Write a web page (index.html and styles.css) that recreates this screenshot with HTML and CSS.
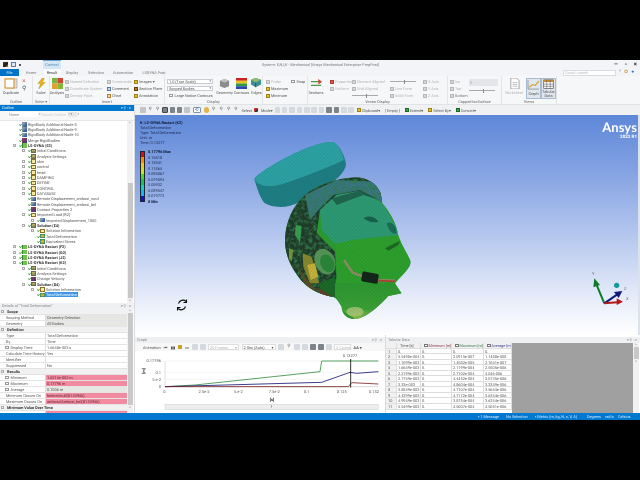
FILE: index.html
```html
<!DOCTYPE html>
<html lang="en">
<head>
<meta charset="utf-8">
<title>System: E,N,I,K - Mechanical</title>
<link rel="stylesheet" href="styles.css">
</head>
<body>
<div class="screen">
  <div class="black top"></div>
  <div class="app">
    <header class="titlebar">
      <div class="qat"><i class="qi dark"></i><i class="qi save"></i><i class="qi caret"></i></div>
      <div class="ctx">Context</div>
      <div class="apptitle">System: E,N,I,K - Mechanical [Ansys Mechanical Enterprise PrepPost]</div>
      <div class="winbtns"><span>–</span><span>▫</span><span>×</span></div>
    </header>
    <nav class="tabs">
      <span class="tab file">File</span><span class="tab home">Home</span><span class="tab active">Result</span><span class="tab disp">Display</span><span class="tab sel">Selection</span><span class="tab auto">Automation</span><span class="tab ls">LSDYNA Post</span>
      <span class="spring"></span>
      <span class="quick">Quick Launch</span><span class="qicons"><i>^</i><i class="gear">✿</i><i class="help">●</i></span>
    </nav>
    <section class="ribbon">
      <div class="rg g-outline">
        <div class="rb">
          <div class="big"><svg class="bi" viewBox="0 0 14 12"><rect x="3" y="1" width="10" height="9" fill="#ddd" stroke="#999" stroke-width=".6"/><rect x="1" y="1" width="9" height="9" fill="#fff" stroke="#d99a3a" stroke-width="1.2"/></svg><span>Duplicate</span></div>
          <div class="col mini"><span class="xred">×</span><span class="mag">⚲</span></div>
        </div>
        <div class="rl">Outline</div>
      </div>
      <div class="rg g-solve">
        <div class="rb"><div class="big"><svg class="bi" viewBox="0 0 14 12"><path d="M8 0 3 6h3L4 12l7-7H8l2-5z" fill="#e7b21c" stroke="#a9801a" stroke-width=".4"/></svg><span>Solve</span></div></div>
        <div class="rl">Solve ▾</div>
      </div>
      <div class="rg g-insert">
        <div class="rb">
          <div class="big w-an"><svg class="bi" viewBox="0 0 14 12"><rect x="1" y="0" width="6" height="6" fill="#7cb342"/><rect x="7" y="0" width="6" height="6" fill="#d9432f"/><rect x="1" y="6" width="6" height="6" fill="#e0a02a"/><rect x="7" y="6" width="6" height="6" fill="#83b735"/></svg><span>Analysis</span></div>
          <div class="col c1 off"><span><i class="sq"></i>Named Selection</span><span><i class="sq"></i>Coordinate System</span><span><i class="sq"></i>Density Point</span></div>
          <div class="col c2"><span class="off"><i class="sq"></i>Commands</span><span><i class="sq bl"></i>Comment</span><span><i class="sq or"></i>Chart</span></div>
          <div class="col c3"><span><i class="sq ye"></i>Images ▾</span><span><i class="sq br"></i>Section Plane</span><span><i class="sq ye"></i>Annotation</span></div>
        </div>
        <div class="rl">Insert</div>
      </div>
      <div class="rg g-display">
        <div class="rb">
          <div class="col c-dd"><span class="dd">1.0 (True Scale)<em>▾</em></span><span class="dd">Scoped Bodies<em>▾</em></span><span class="chk"><i class="cb"></i>Large Notice Contours</span></div>
          <div class="big w-ge"><svg class="bi" viewBox="0 0 14 12"><path d="M7 1 12 3v6l-5 2-5-2V3z" fill="#8d8d8d"/><path d="M7 1 12 3 7 5 2 3z" fill="#c2c2c2"/></svg><span>Geometry</span></div>
          <div class="big w-ge"><svg class="bi" viewBox="0 0 14 12"><rect x="1" y="0" width="12" height="3" fill="#c22"/><rect x="1" y="3" width="12" height="3" fill="#e8c21c"/><rect x="1" y="6" width="12" height="3" fill="#2d9b3c"/><rect x="1" y="9" width="12" height="3" fill="#2a45b5"/></svg><span>Contours</span></div>
          <div class="big w-ed"><svg class="bi" viewBox="0 0 14 12"><path d="M6 0 12 2v5l-6 3-5-3V2z" fill="#3d8f93"/><path d="M6 0 12 2 6 5 1 2z" fill="#8dbb6b"/><path d="M6 5v5" stroke="#234" stroke-width=".6"/></svg><span>Edges</span></div>
        </div>
        <div class="rl">Display</div>
      </div>
      <div class="rg g-probe">
        <div class="rb">
          <div class="col c4"><span class="off"><i class="sq"></i>Probe</span><span><i class="sq ye"></i>Maximum</span><span><i class="sq ye"></i>Minimum</span></div>
          <div class="col c5"><span class="chk"><i class="cb"></i>Snap</span></div>
        </div>
      </div>
      <div class="rg g-vector">
        <div class="rb">
          <div class="big w-se"><svg class="bi" viewBox="0 0 14 12"><path d="M1 4h11M1 8h11" stroke="#4b9b48" stroke-width="1.2"/><path d="M9 1l4 3-4 3z" fill="#d6402c"/></svg><span>Sections</span></div>
          <div class="col c6 off"><span><i class="sq re"></i>Proportional</span><span><i class="sq"></i>Uniform</span></div>
          <div class="col c7 off"><span><i class="sq"></i>Element Aligned</span><span><i class="sq"></i>Grid Aligned</span><span class="slider"><b></b></span></div>
          <div class="col c8 off"><span class="slider"><b></b></span><span><i class="sq"></i>Line Form</span><span><i class="sq"></i>Solid Form</span></div>
          <div class="col c9 off"><span><i class="sq"></i>X Axis</span><span><i class="sq"></i>Y Axis</span><span><i class="sq"></i>Z Axis</span></div>
        </div>
        <div class="rl">Vector Display</div>
      </div>
      <div class="rg g-capped">
        <div class="rb">
          <div class="col c10 off"><span><i class="sq"></i>Iso</span><span><i class="sq"></i>Top</span><span class="dim"><i class="sq"></i>Bottom</span></div>
          <div class="col c11"><span class="capbox">0.</span><span class="slider"><b></b></span></div>
        </div>
        <div class="rl">Capped IsoSurface</div>
      </div>
      <div class="rg g-views">
        <div class="rb">
          <div class="big w-vw off"><svg class="bi" viewBox="0 0 14 12"><path d="M3 0h6l3 3v9H3z" fill="#fff" stroke="#8b8b8b" stroke-width=".8"/><path d="M5 5h5M5 7h5M5 9h5" stroke="#8b8b8b" stroke-width=".6"/></svg><span>Worksheet</span></div>
          <div class="big w-vw on"><svg class="bi" viewBox="0 0 14 12"><path d="M1 11V1M1 11h12" stroke="#777" stroke-width=".7" fill="none"/><path d="M2 9l4-3 3 1 4-5" stroke="#d69a22" stroke-width="1.1" fill="none"/></svg><span>Graph</span></div>
          <div class="big w-vw on tab2"><svg class="bi" viewBox="0 0 14 12"><rect x="1.5" y="1" width="11" height="10" fill="#fff" stroke="#555" stroke-width=".8"/><rect x="1.5" y="1" width="11" height="2.5" fill="#c58a2f"/><path d="M1.5 6h11M1.5 8.500h11M5 1v10M9 1v10" stroke="#555" stroke-width=".6"/></svg><span>Tabular<br>Data</span></div>
        </div>
        <div class="rl">Views</div>
      </div>
    </section>

    <main class="work">
      <aside class="left">
        <section class="outline">
          <div class="ptitle blue"><span>Outline</span><em>▾ ⚲ ▫ ×</em></div>
          <div class="otools"><span class="fld">Name</span><em class="ar">▾</em><span class="srch">Search Outline</span><span class="fbtn">✓▾</span><em class="ar">▾</em></div>
          <div class="treewrap">
            <div class="tree">
              <div class="r la"><b class="x n"></b><i class="ck"></i><i class="ic bl"></i><span>RigidBody Additional Node 8</span></div>
              <div class="r la"><b class="x n"></b><i class="ck"></i><i class="ic bl"></i><span>RigidBody Additional Node 9</span></div>
              <div class="r la"><b class="x n"></b><i class="ck"></i><i class="ic bl"></i><span>RigidBody Additional Node 10</span></div>
              <div class="r la"><b class="x n"></b><i class="ck"></i><i class="ic mg"></i><span>Merge RigidBodies</span></div>
              <div class="r la sys"><b class="x"></b><i class="ck"></i><i class="ic gr"></i><span>LS-DYNA (E2)</span></div>
              <div class="r lb"><b class="x"></b><i class="ck"></i><i class="ic cf"></i><span>Initial Conditions</span></div>
              <div class="r lb"><b class="x n"></b><i class="ck"></i><i class="ic cf"></i><span>Analysis Settings</span></div>
              <div class="r lb"><b class="x"></b><i class="ck"></i><i class="ic fo"></i><span>skin</span></div>
              <div class="r lb"><b class="x"></b><i class="ck"></i><i class="ic fo"></i><span>control</span></div>
              <div class="r lb"><b class="x"></b><i class="ck"></i><i class="ic fo"></i><span>head</span></div>
              <div class="r lb"><b class="x"></b><i class="ck"></i><i class="ic fo"></i><span>DAMPING</span></div>
              <div class="r lb"><b class="x"></b><i class="ck"></i><i class="ic fo"></i><span>DEFINE</span></div>
              <div class="r lb"><b class="x"></b><i class="ck"></i><i class="ic fo"></i><span>CONTROL</span></div>
              <div class="r lb"><b class="x"></b><i class="ck"></i><i class="ic fo"></i><span>DATABASE</span></div>
              <div class="r lb"><b class="x n"></b><i class="ck"></i><i class="ic bl"></i><span>Remote Displacement_ambosi_rund</span></div>
              <div class="r lb"><b class="x n"></b><i class="ck"></i><i class="ic bl"></i><span>Remote Displacement_ambosi_bel</span></div>
              <div class="r lb"><b class="x n"></b><i class="ck"></i><i class="ic mg"></i><span>Contact Properties 2</span></div>
              <div class="r lb"><b class="x"></b><i class="ck"></i><i class="ic fo"></i><span>Imported Load (R2)</span></div>
              <div class="r lc"><b class="x"></b><i class="ck"></i><i class="ic bl"></i><span>Imported Displacement_1000</span></div>
              <div class="r lb sys"><b class="x"></b><i class="ck"></i><i class="ic cf"></i><span>Solution (E4)</span></div>
              <div class="r lc"><b class="x"></b><i class="ck"></i><i class="ic fo"></i><span>Solution Information</span></div>
              <div class="r lc"><b class="x n"></b><i class="ck"></i><i class="ic tl"></i><span>Total Deformation</span></div>
              <div class="r lc"><b class="x n"></b><i class="ck"></i><i class="ic tl"></i><span>Equivalent Stress</span></div>
              <div class="r la sys"><b class="x"></b><i class="ck"></i><i class="ic gr"></i><span>LS-DYNA Restart (F2)</span></div>
              <div class="r la sys"><b class="x"></b><i class="ck"></i><i class="ic gr"></i><span>LS-DYNA Restart (G2)</span></div>
              <div class="r la sys"><b class="x"></b><i class="ck"></i><i class="ic gr"></i><span>LS-DYNA Restart (J2)</span></div>
              <div class="r la sys"><b class="x"></b><i class="ck"></i><i class="ic gr"></i><span>LS-DYNA Restart (K2)</span></div>
              <div class="r lb"><b class="x"></b><i class="ck"></i><i class="ic cf"></i><span>Initial Conditions</span></div>
              <div class="r lb"><b class="x n"></b><i class="ck"></i><i class="ic cf"></i><span>Analysis Settings</span></div>
              <div class="r lb"><b class="x n"></b><i class="ck"></i><i class="ic mg"></i><span>Change Velocity</span></div>
              <div class="r lb sys"><b class="x"></b><i class="ck"></i><i class="ic cf"></i><span>Solution (B4)</span></div>
              <div class="r lc"><b class="x"></b><i class="ck"></i><i class="ic fo"></i><span>Solution Information</span></div>
              <div class="r lc"><b class="x n"></b><i class="ck"></i><i class="ic tl"></i><span class="selrow">Total Deformation</span></div>
            </div>
            <div class="vscroll"><em>^</em><b class="thumb t1"></b><em>v</em></div>
          </div>
        </section>
        <section class="details">
          <div class="ptitle grey"><span>Details of "Total Deformation"</span><em>▾ ⚲ ▫ ×</em></div>
          <div class="detwrap">
            <div class="dgrid">
              <div class="dh"><b class="m"></b>Scope</div>
              <div class="k">Scoping Method</div><div class="v gy">Geometry Selection</div>
              <div class="k">Geometry</div><div class="v gy">All Bodies</div>
              <div class="dh"><b class="m"></b>Definition</div>
              <div class="k">Type</div><div class="v">Total Deformation</div>
              <div class="k">By</div><div class="v">Time</div>
              <div class="k ind"><i class="cb"></i>Display Time</div><div class="v">1.6648e-003 s</div>
              <div class="k">Calculate Time History</div><div class="v">Yes</div>
              <div class="k">Identifier</div><div class="v"></div>
              <div class="k">Suppressed</div><div class="v">No</div>
              <div class="dh"><b class="m"></b>Results</div>
              <div class="k ind"><i class="cb"></i>Minimum</div><div class="v pk">1.6215e-002 m</div>
              <div class="k ind"><i class="cb"></i>Maximum</div><div class="v pk">0.17796 m</div>
              <div class="k ind"><i class="cb"></i>Average</div><div class="v gy">0.1006 m</div>
              <div class="k">Minimum Occurs On</div><div class="v pk">helmet/null(B1.DYNA)</div>
              <div class="k">Maximum Occurs On</div><div class="v pk">ambosi/Ambosi_bel(B1.DYNA)</div>
              <div class="dh"><b class="m"></b>Minimum Value Over Time</div>
              <div class="k"></div><div class="v pk"></div>
            </div>
            <div class="vscroll v2"><em>^</em><b class="thumb t2"></b><em>v</em></div>
          </div>
        </section>
      </aside>

      <div class="right">
        <div class="gtools">
          <i class="ti"></i><i class="ti mg2">⚲</i><i class="ti mg2">⚲</i><i class="ti on2"></i><i class="ti dk"></i><i class="ti dk"></i><i class="ti"></i><i class="ti box">⟲</i><i class="ti or2"></i><i class="ti mg2">⚲</i><i class="ti mg2">⚲</i><i class="ti mg2">⚲</i><i class="ti mg2">⚲</i>
          <span class="lbl">Select</span><i class="ti arrow"></i><span class="lbl">Mode▾</span>
          <i class="ti lt"></i><i class="ti lt"></i><i class="ti lt"></i><i class="ti lt"></i><i class="ti lt"></i><i class="ti lt"></i><i class="ti lt"></i><i class="ti dk"></i><i class="ti dk"></i><i class="ti lt"></i><i class="ti lt"></i>
          <span class="lbl"><i class="sq ye"></i>Clipboard▾</span><span class="lbl gap2">[ Empty ]</span><span class="lbl gap2"><i class="sq gn"></i>Extend▾</span><span class="lbl gap2"><i class="sq ye"></i>Select By▾</span><span class="lbl gap2"><i class="sq gn"></i>Convert▾</span>
        </div>

        <div class="view">
          <svg class="scene" viewBox="135 115 503 220" aria-hidden="true">
            <defs>
              <pattern id="mesh" width="4" height="4" patternUnits="userSpaceOnUse" patternTransform="rotate(-22)">
                <path d="M0 0H4M0 0V4" stroke="#0a3a22" stroke-width=".9" fill="none"/>
              </pattern>
              <clipPath id="hc"><path d="M196 380C190 320 215 260 255 225 290 195 350 175 405 172 440 172 470 190 482 220L487 250C505 270 530 310 533 340 540 370 565 405 572 425 572 445 545 465 525 490L545 520 505 528C480 555 445 590 410 597 385 600 365 585 365 560 355 545 350 535 340 530 300 525 260 505 235 470 210 435 200 410 196 380Z"/></clipPath>
              <clipPath id="hb"><path d="M180 160H500V250L420 215 350 225 300 270 290 340 345 395 350 470 340 540H180Z"/></clipPath>
              <linearGradient id="neck" x1="0" y1="0" x2="0" y2="1"><stop offset="0" stop-color="#2e9c30"/><stop offset=".7" stop-color="#3ea636"/><stop offset="1" stop-color="#a9c850"/></linearGradient>
              <filter id="mott" x="0" y="0" width="1" height="1" color-interpolation-filters="sRGB"><feTurbulence type="fractalNoise" baseFrequency=".09" numOctaves="3" seed="4"/><feColorMatrix values="0 0 0 0 .2  0 0 0 0 .5  0 0 0 0 .3  0 0 2.500 0 -1.050"/></filter>
            </defs>
            <g transform="translate(220 120) scale(.33333)">
              <path d="M103 178 110 200C118 225 128 245 135 250 160 265 205 265 240 245 300 215 370 175 378 135 376 110 360 78 340 66 300 62 215 100 150 140 125 155 105 170 103 178Z" fill="#1f8189"/>
              <path d="M103 178C115 200 150 205 195 190 270 165 350 130 372 120 368 100 355 75 340 66 300 62 215 100 150 140 125 155 105 170 103 178Z" fill="#2ea6ab"/>
              <path d="M103 178 110 200C118 225 128 245 135 250 160 265 205 265 240 245 300 215 370 175 378 135 376 110 360 78 340 66 300 62 215 100 150 140 125 155 105 170 103 178Z" fill="url(#mesh)" opacity=".4"/>
              <g clip-path="url(#hc)">
                <rect x="180" y="160" width="400" height="450" fill="#2da12e"/>
                <path d="M180 160H500V250L420 215 350 225 300 270 290 340 345 395 350 470 340 540H180Z" fill="#223a2a"/>
                <path d="M255 225 350 180 470 185 490 250 420 210 340 225 295 270 270 300Z" fill="#3c7a88"/>
                <rect x="180" y="160" width="400" height="450" clip-path="url(#hb)" filter="url(#mott)"/>
                <path d="M300 270 350 225 420 212 490 252 540 345 400 360 345 372 305 330Z" fill="#2f9f78"/>
                <path d="M345 372 400 360 540 345 580 430 525 490 340 530 350 470Z" fill="#2fa52c"/>
                <path d="M340 490 525 490 545 525 410 600 365 570Z" fill="url(#neck)"/>
                <path d="M300 490 345 470 345 535 300 530Z" fill="#1d6a2a"/>
                <path d="M227 315 245 318 240 368 225 345Z" fill="#3aa350"/>
                <path d="M207 385 220 390 215 425 207 415Z" fill="#7a9a3a"/>
                <path d="M248 400 275 410 298 490 270 490 250 440Z" fill="#8f8c2e"/>
                <path d="M262 435 285 430 295 470 272 480Z" fill="#d0b83a"/>
                <path d="M225 430 262 505 300 525 255 470Z" fill="#5c4d25"/>
                <path d="M290 500 345 535 300 520Z" fill="#6a3a28"/>
                <ellipse cx="315" cy="425" rx="30" ry="40" transform="rotate(-25 315 425)" fill="#5a9a5a"/>
                <ellipse cx="322" cy="430" rx="20" ry="28" transform="rotate(-25 322 430)" fill="#2d8a3a"/>
                <path d="M372 420 398 458 430 470 475 480 525 482" stroke="#9a8f6a" stroke-width="7" fill="none"/>
                <path d="M475 482 525 484" stroke="#b8403a" stroke-width="5" fill="none"/>
                <rect x="425" y="458" width="50" height="30" rx="5" transform="rotate(10 450 473)" fill="#14221a"/>
                <path d="M430 295C445 285 465 290 475 305 460 310 445 305 430 295Z" fill="#0f4a3a" opacity=".7"/>
                <path d="M500 310C515 300 530 320 530 340 515 345 505 330 500 310Z" fill="#125c4a" opacity=".7"/>
                <path d="M495 385 540 362 535 375 505 392Z" fill="#1b5a22" opacity=".8"/>
                <path d="M335 235 420 212 480 240 430 225 350 255Z" fill="#12302a" opacity=".5"/>
                <ellipse cx="405" cy="575" rx="26" ry="14" fill="#c8d68c" opacity=".7"/>
                <rect x="180" y="160" width="400" height="450" fill="url(#mesh)" opacity=".45"/>
              </g>
            </g>
            <g class="rot" fill="none" stroke="#111" stroke-width="1.1">
              <path d="M178.500 303.500a4.500 4.500 0 0 1 7.500-2"/><path d="M185.500 306.500a4.500 4.500 0 0 1-7.500 2"/>
              <path d="M186.500 299.500v3h-3M177.500 310.500v-3h3"/>
            </g>
            <g transform="translate(560 115) scale(.33333)">
              <path d="M133 565 108 505" stroke="#0f7a2a" stroke-width="6"/><path d="M103 490 120 510 100 517Z" fill="#0f7a2a"/>
              <path d="M133 565 172 538" stroke="#101a7a" stroke-width="6"/><path d="M187 528 176 549 162 531Z" fill="#101a7a"/>
              <path d="M133 565 172 562" stroke="#b21a1a" stroke-width="6"/><path d="M189 560 170 570 170 550Z" fill="#b21a1a"/>
              <circle cx="170" cy="511" r="8" fill="#169a9c"/>
            </g>
            <g class="axl"><text x="592" y="275">Y</text><text x="624" y="290">Z</text><text x="626" y="300">X</text></g>
          </svg>
          <div class="legend">
            <div class="lt1">K: LS-DYNA Restart (K2)</div>
            <div>Total Deformation</div>
            <div>Type: Total Deformation</div>
            <div>Unit: m</div>
            <div>Time: 0.13277</div>
            <div class="scale">
              <div class="bands"><i class="b1"></i><i class="b2"></i><i class="b3"></i><i class="b4"></i><i class="b5"></i><i class="b6"></i><i class="b7"></i><i class="b8"></i><i class="b9"></i></div>
              <div class="vals"><b>0.17796 Max</b><span>0.15818</span><span>0.13841</span><span>0.11864</span><span>0.098867</span><span>0.079094</span><span>0.05932</span><span>0.039547</span><span>0.019773</span><b>0 Min</b></div>
            </div>
          </div>
          <div class="brand"><div class="ansys">Ansys</div><div class="rel">2022 R1</div></div>
        </div>

        <div class="bottom">
          <section class="graph">
            <div class="ptitle grey"><span>Graph</span><em>▾ ⚲ ▫ ×</em></div>
            <div class="anim">
              <span class="alabel">Animation</span><i class="pb">⏮</i><i class="pb">▮▮</i><i class="pb stop"></i><i class="pb">⏭</i><i class="ti lt"></i><i class="ti lt"></i><span class="adrop off">20 Frames<em>▾</em></span><span class="adrop w2">2 Sec (Auto)<em>▾</em></span><i class="ti lt"></i><i class="ti mg2">⚲</i><i class="ti lt"></i><i class="ti lt"></i><i class="ti dk"></i><i class="ti dk"></i><i class="ti lt"></i><span class="adrop off w3">2 Cycles</span><span class="alabel aa">AA ▾</span>
            </div>
            <svg class="plot" viewBox="0 48 750 186" aria-label="Graph of deformation against time">
              <path d="M90 78H730M90 112H730M90 133H730M90 155H730" stroke="#e2e2e2" stroke-width="1"/>
              <path d="M90 78V155M90 155H730" stroke="#b0b0b0" stroke-width="1.200" fill="none"/>
              <path d="M90 155 180 150 555 110 560 78H730" stroke="#2f8a3a" stroke-width="2.400" fill="none"/>
              <path d="M90 155 560 142 645 112 665 115 730 110" stroke="#20207a" stroke-width="2.600" fill="none"/>
              <path d="M90 155 640 155 650 143 730 147" stroke="#7a1a1a" stroke-width="2.400" fill="none"/>
              <path d="M647 72V158" stroke="#000" stroke-width="2.400"/>
              <g class="ptext">
                <text x="645" y="66" class="mid">0.13277</text>
                <text x="78" y="82" class="end">0.17796</text><text x="78" y="116" class="end">0.1</text><text x="78" y="137" class="end">5.e-2</text><text x="78" y="159" class="end">0</text>
                <text x="90" y="174" class="mid">0.</text><text x="207" y="174" class="mid">2.5e-2</text><text x="310" y="174" class="mid">5.e-2</text><text x="418" y="174" class="mid">7.5e-2</text><text x="515" y="174" class="mid">0.1</text><text x="620" y="174" class="mid">0.125</text><text x="717" y="174" class="mid">0.152</text>
                <text x="411" y="198" class="mid bold">[s]</text>
                <text x="34" y="112" class="mid bold" transform="rotate(-90 30 112)">[m]</text>
              </g>
              <rect x="90" y="208" width="640" height="16" fill="#eee" stroke="#bbb"/>
              <text x="410" y="220" class="mid ptext">1</text>
            </svg>
          </section>
          <section class="tabular">
            <div class="ptitle grey"><span>Tabular Data</span><em>▾ ⚲ ▫ ×</em></div>
            <div class="tabwrap">
              <div class="tgrid">
                <div class="th"></div><div class="th">Time [s]</div><div class="th"><i class="fb"></i><span class="cmin">Minimum [m]</span></div><div class="th"><i class="fb"></i><span class="cmax">Maximum [m]</span></div><div class="th"><i class="fb"></i><span class="cavg">Average [m]</span></div>
                <div class="n">1</div><div>0.</div><div>0.</div><div>0.</div><div>0.</div>
                <div class="n">2</div><div>5.5498e-004</div><div>0.</div><div>2.0915e-007</div><div>1.1488e-008</div>
                <div class="n">3</div><div>1.1099e-003</div><div>0.</div><div>1.4582e-005</div><div>2.1041e-007</div>
                <div class="n">4</div><div>1.6649e-003</div><div>0.</div><div>2.1199e-004</div><div>2.5505e-006</div>
                <div class="n">5</div><div>2.2199e-003</div><div>0.</div><div>2.7102e-004</div><div>4.046-006</div>
                <div class="n">6</div><div>2.7749e-003</div><div>0.</div><div>4.4452e-004</div><div>3.0135e-006</div>
                <div class="n">7</div><div>3.33e-003</div><div>0.</div><div>4.8604e-004</div><div>3.3349e-006</div>
                <div class="n">8</div><div>3.8849e-003</div><div>0.</div><div>4.7107e-004</div><div>3.5644e-006</div>
                <div class="n">9</div><div>4.4399e-003</div><div>0.</div><div>4.7172e-004</div><div>3.6344e-006</div>
                <div class="n">10</div><div>4.9949e-003</div><div>0.</div><div>3.8754e-004</div><div>3.6244e-006</div>
                <div class="n">11</div><div>5.5499e-003</div><div>0.</div><div>4.5007e-004</div><div>4.5051e-006</div>
              </div>
              <div class="greyarea"></div>
              <div class="vscroll v3"><em>^</em><b class="thumb t3"></b><em>v</em></div>
            </div>
          </section>
        </div>
      </div>
    </main>
    <footer class="status">
      <span class="s1">▪ 1 Message</span><span class="s2">No Selection</span><span class="s3">▪ Metric (m, kg, N, s, V, A)</span><span class="s4">Degrees</span><span class="s5">rad/s</span><span class="s6">Celsius</span>
    </footer>
  </div>
  <div class="black bot"></div>
</div>
</body>
</html>
```

FILE: styles.css
```css
* { box-sizing: border-box; }
html, body { margin: 0; padding: 0; width: 640px; height: 480px; overflow: hidden; background: #000; }
body { font-family: Roboto, "Noto Sans", "Liberation Sans", sans-serif; font-size: 3.850px; line-height: 5px; color: #555; text-rendering: geometricPrecision; }
i, em { font-style: normal; }
svg { display: block; }
.screen { width: 640px; height: 480px; display: flex; flex-direction: column; }
.black { background: #000; flex: none; }
.top { height: 60px; }
.bot { height: 60px; }
.app { height: 360px; display: flex; flex-direction: column; background: #eef0f3; filter: blur(.3px); }

/* title bar */
.titlebar { height: 9px; display: flex; align-items: center; background: #f2f4f7; flex: none; }
.qat { width: 43px; display: flex; gap: 3px; padding-left: 3px; align-items: center; }
.qi { width: 5px; height: 5px; display: block; }
.qi.dark { background: linear-gradient(135deg, #5a3a10, #1d1d1d 60%, #d8a020); }
.qi.save { background: #dfe5f3; border: 1px solid #5b7cb8; }
.qi.caret { width: 2px; height: 2px; background: #555; }
.ctx { width: 18px; height: 9px; background: #d3e7f6; border-top: 1px solid #62a5d8; color: #5b86ad; text-align: center; line-height: 8px; }
.apptitle { margin-left: 201px; color: #777; white-space: nowrap; }
.winbtns { margin-left: auto; display: flex; gap: 7px; padding-right: 3px; color: #222; font-size: 6px; font-weight: 700; line-height: 8px; }

/* tabs */
.tabs { height: 7px; display: flex; align-items: stretch; background: #f2f4f7; flex: none; line-height: 7px; }
.tab { display: block; text-align: center; color: #777; }
.file { width: 19px; background: #0072c6; color: #d8ecfa; }
.home { width: 24px; }
.active { width: 18px; color: #444; background: #f8f9fa; }
.disp { width: 22px; }
.sel { width: 26px; }
.auto { width: 28px; }
.ls { width: 34px; }
.spring { flex: 1; }
.quick { width: 53px; height: 6px; margin-top: 1px; background: #fff; border: 1px solid #d8dce2; color: #bbb; line-height: 4px; padding-left: 1px; }
.qicons { width: 24px; display: flex; gap: 3px; padding-left: 3px; color: #7a8aa0; font-size: 5px; }
.qicons .gear { color: #c9a040; }
.qicons .help { color: #2f78c8; }

/* ribbon */
.ribbon { height: 29px; flex: none; display: flex; background: #f6f7f9; border-bottom: 1px solid #e0e3e8; }
.rg { display: flex; flex-direction: column; border-right: 1px solid #e2e4e8; flex: none; }
.rb { height: 23px; display: flex; padding-top: 2px; }
.rl { height: 5px; text-align: center; color: #666; line-height: 5px; }
.g-outline { width: 33px; }
.g-solve { width: 17px; }
.g-insert { width: 115px; }
.g-display { width: 98px; }
.g-probe { width: 45px; }
.g-vector { width: 140px; }
.g-capped { width: 54px; }
.g-views { width: 55px; }
.big { display: flex; flex-direction: column; align-items: center; width: 16px; flex: none; text-align: center; white-space: nowrap; line-height: 4.500px; }
.bi { width: 13px; height: 11px; margin-bottom: 2px; }
.g-outline .big { width: 22px; }
.g-outline .bi { width: 14px; height: 12px; margin-bottom: 1px; }
.mini { width: 9px; }
.xred { color: #c55; font-size: 7px; line-height: 10px; }
.mag { color: #555; font-size: 6px; line-height: 8px; }
.col { display: flex; flex-direction: column; gap: 2px; white-space: nowrap; flex: none; padding-top: 1px; }
.col > span { height: 5px; display: flex; align-items: center; line-height: 5px; }
.off, .off > span { color: #b5b5b5; }
.sq { width: 4px; height: 4px; margin-right: 1px; background: #d7d7d7; border: .5px solid #b8b8b8; flex: none; display: inline-block; vertical-align: -1px; }
.sq.bl { background: #cfdcf0; border-color: #5576a8; }
.sq.or { background: #f1d9a8; border-color: #b9812b; }
.sq.ye { background: #e8c02c; border-color: #9f7f14; }
.sq.br { background: #b9772d; border-color: #63400f; }
.sq.re { background: #d85a4a; border-color: #b13a2c; }
.sq.gn { background: #39a043; border-color: #1c6a26; }
.w-an { width: 14px; }
.c1 { width: 42px; margin-left: 1px; }
.c2 { width: 27px; }
.c3 { width: 30px; }
.c-dd { width: 51px; padding-left: 2px; }
.dd { width: 46px; background: #fff; border: .5px solid #c9ccd2; padding: 0 1px; justify-content: space-between; color: #555; }
.dd em { font-size: 3px; }
.chk { color: #555; gap: 1px; padding-left: 2px; }
.cb { width: 3.500px; height: 3.500px; border: .5px solid #999; background: #fff; display: inline-block; margin-right: 1px; flex: none; }
.w-ge { width: 17px; }
.w-ed { width: 13px; }
.c4 { width: 26px; padding-left: 3px; }
.c5 { width: 16px; }
.w-se { width: 16px; }
.c6 { width: 28px; padding-left: 6px; }
.c7 { width: 38px; }
.c8 { width: 33px; }
.c9 { width: 20px; }
.c10 { width: 21px; padding-left: 2px; }
.c10 .dim { color: #777; }
.c11 { width: 32px; }
.col > .capbox { width: 29px; height: 7px; background: #e4e6e9; color: #aaa; padding-left: 1px; }
.slider::before { content: ""; height: 1px; width: 26px; background: #aaa; display: block; }
.slider b { width: 1px; height: 4px; background: #888; margin-left: -12px; }
.w-vw { height: 21px; color: #888; }
.w-vw:first-child { margin-left: 4px; margin-right: 4px; color: #b5b5b5; }
.on { background: #dfe6ee; border: .5px solid #a9bbd0; color: #555; width: 15px; }
.tab2 { line-height: 3.800px; }
.tab2 .bi { margin-bottom: 1px; }

/* workspace */
.work { flex: 1; height: 308px; display: flex; min-height: 0; }
.left { width: 135px; flex: none; display: flex; flex-direction: column; background: #fff; border-right: 1px solid #d8dbe0; }
.outline { height: 198px; display: flex; flex-direction: column; flex: none; }
.ptitle { height: 6px; display: flex; justify-content: space-between; padding: 0 3px 0 2px; align-items: center; flex: none; line-height: 6px; white-space: nowrap; }
.ptitle em { font-size: 3.500px; }
.ptitle.blue { background: #0078d0; color: #e2effa; }
.ptitle.grey { background: #eef0f2; color: #888; }
.otools { height: 10px; flex: none; background: #f7f7f8; display: flex; align-items: center; padding: 0 2px 3px 8px; gap: 1px; border-bottom: 1px solid #e6e6e8; }
.fld { width: 30px; color: #888; background: #fff; padding-left: 1px; }
.ar { color: #888; font-size: 3px; }
.srch { width: 25px; color: #ccc; }
.fbtn { color: #888; width: 9px; background: #e8e8e8; font-size: 3.500px; }
.treewrap { flex: 1; display: flex; min-height: 0; }
.tree { flex: 1; padding-top: .670px; overflow: hidden; }
.r { height: 5.333px; display: flex; align-items: center; white-space: nowrap; line-height: 5.300px; color: #555; }
.la { padding-left: 13px; }
.lb { padding-left: 22px; }
.lc { padding-left: 31px; }
.sys span { font-weight: 700; color: #333; }
.x { width: 3px; height: 3px; border: .5px solid #aaa; background: #fff; margin-right: 3px; flex: none; }
.x.n { visibility: hidden; }
.ck { width: 3px; height: 3px; flex: none; border-left: .6px solid #2d9a3a; border-bottom: .8px solid #2d9a3a; transform: rotate(-45deg) scale(.8, .6); }
.ic { width: 5px; height: 4.500px; margin: 0 1px 0 0; flex: none; }
.ic.bl { background: linear-gradient(135deg, #8c9aa8 30%, #3963a6 70%); }
.ic.mg { background: linear-gradient(135deg, #9a3b5b, #3a3a72); }
.ic.gr { background: #72c24c; border-left: 1.500px solid #2f8a2d; }
.ic.cf { background: linear-gradient(#cbb469, #7b8b55); border: .5px solid #6a6a4a; }
.ic.fo { background: #f7e9a0; border: .7px solid #8a7020; }
.ic.tl { background: radial-gradient(#cbb23a 30%, #2c8a6c 70%); }
.selrow { background: #3c96e6; color: #fff; padding: 0 1px; margin-left: -1px; }
.vscroll { width: 6px; flex: none; background: #f1f1f1; display: flex; flex-direction: column; align-items: center; color: #666; font-size: 3px; margin-right: 1px; line-height: 4px; }
.vscroll em { height: 4px; flex: none; }
.thumb { width: 5px; background: #c8c8c8; display: block; }
.t1 { height: 115px; margin-top: 58px; }
.details { flex: 1; display: flex; flex-direction: column; min-height: 0; background: #fff; }
.detwrap { flex: 1; display: flex; min-height: 0; overflow: hidden; }
.dgrid { width: 128px; display: grid; grid-template-columns: 45px 83px; grid-auto-rows: 6px; align-content: start; overflow: hidden; }
.dgrid > div { white-space: nowrap; overflow: hidden; line-height: 5.600px; border-bottom: .5px solid #e4e4e4; padding-left: 6px; color: #555; }
.dgrid .v { border-left: .5px solid #ddd; padding-left: 1px; }
.dgrid .dh { grid-column: 1 / 3; font-weight: 700; padding-left: 1px; background: #f1f1f1; color: #333; display: flex; align-items: center; gap: 3px; }
.dh .m { width: 3px; height: 3px; border: .5px solid #aaa; background: #fff; }
.dgrid .ind { padding-left: 5px; display: flex; align-items: center; gap: 1px; }
.dgrid .gy { background: #e6e6e3; }
.dgrid .pk { background: #f28aa0; color: #5a2a35; }
.t2 { height: 92px; }

.right { flex: 1; min-width: 0; display: flex; flex-direction: column; }
.gtools { height: 10px; flex: none; display: flex; align-items: center; gap: 1.900px; padding-left: 5px; background: #eff1f3; white-space: nowrap; overflow: hidden; }
.ti { width: 5.500px; height: 5.500px; flex: none; display: block; background: #c2c4c8; border-radius: 1px; font-size: 4.500px; line-height: 5px; text-align: center; color: #555; }
.ti.mg2 { background: none; }
.ti.on2 { background: #79818b; border: .5px solid #444; }
.ti.dk { background: #7d838b; }
.ti.lt { background: #d4dae0; }
.ti.box { background: #fff; border: .5px solid #7e93ad; color: #2b5b93; margin: 0 1px; width: 8px; }
.ti.or2 { background: #e3b44d; border-radius: 50%; }
.ti.arrow { background: linear-gradient(135deg, #d22 45%, #333 55%); width: 4px; height: 4px; }
.lbl { color: #555; margin-left: 1px; display: inline-flex; align-items: center; }
.gap2 { margin-left: 3px; }

.view { height: 220px; flex: none; position: relative; background: linear-gradient(#5d87d8 0%, #83a2e2 25%, #b5c7ee 55%, #e1e8f8 80%, #fff 100%); border-right: 2px solid #dce2ec; overflow: hidden; }
.scene { position: absolute; left: 0; top: 0; width: 503px; height: 220px; }
.axl text { font-size: 4px; fill: #666; font-family: Roboto, sans-serif; }
.legend { position: absolute; left: 5px; top: 4.500px; color: #1d2a4a; line-height: 5px; white-space: nowrap; }
.lt1 { font-weight: 700; color: #10182c; }
.scale { display: flex; margin-top: 6.500px; }
.bands { width: 5px; height: 51px; display: flex; flex-direction: column; border: .5px solid #223; }
.bands i { flex: 1; display: block; }
.b1 { background: #d80f0f; }
.b2 { background: #ff8a00; }
.b3 { background: #f0c814; }
.b4 { background: #c8e614; }
.b5 { background: #3ce01e; }
.b6 { background: #0fc84c; }
.b7 { background: #00dcb4; }
.b8 { background: #14b4f0; }
.b9 { background: #0a14c8; }
.vals { margin-left: 3px; margin-top: -2px; display: flex; flex-direction: column; }
.vals span, .vals b { height: 5.500px; line-height: 5.500px; display: block; }
.vals b { color: #0c1428; }
.brand { position: absolute; right: 1px; top: 6px; color: #fff; text-align: right; }
.ansys { font-family: Lato, "Open Sans", sans-serif; font-weight: 700; font-size: 13px; line-height: 12px; letter-spacing: .1px; }
.rel { font-size: 4.500px; font-weight: 700; line-height: 6px; margin-top: 2px; }

.bottom { flex: 1; display: flex; min-height: 0; }
.graph { width: 250px; flex: none; display: flex; flex-direction: column; background: #fff; }
.graph .ptitle { margin-top: 2px; background: #eef0f2; }
.anim { height: 8px; flex: none; display: flex; align-items: center; gap: 2.500px; padding-left: 8px; background: #f7f7f8; white-space: nowrap; }
.alabel { color: #555; }
.pb { color: #444; font-size: 4px; width: 5px; text-align: center; }
.pb.stop { background: #c9a326; height: 4px; width: 4px; }
.adrop { width: 31px; height: 6px; background: #fff; border: .5px solid #ddd; display: flex; justify-content: space-between; padding: 0 1px; line-height: 5px; }
.adrop.w2 { width: 34px; }
.adrop.w3 { width: 17px; }
.aa { font-weight: 700; }
.plot { width: 250px; height: 62px; flex: none; }
.plot text, .ptext { font-size: 12px; fill: #555; font-family: Roboto, sans-serif; }
.ptext .end { text-anchor: end; }
.mid { text-anchor: middle; }
.plot .bold { font-weight: 700; fill: #222; }
.tabular { flex: 1; display: flex; flex-direction: column; min-width: 0; background: #fff; border-left: 1px solid #d8dbe0; }
.tabular .ptitle { margin-top: 2px; }
.tabwrap { flex: 1; display: flex; min-height: 0; overflow: hidden; }
.tgrid { width: 126px; flex: none; display: grid; grid-template-columns: 11px 24px 31px 32px 28px; grid-auto-rows: 5.560px; align-content: start; overflow: hidden; background: #fff; }
.tgrid > div { white-space: nowrap; overflow: hidden; line-height: 5.300px; border-right: .5px solid #ddd; border-bottom: .5px solid #ddd; padding-left: 1px; color: #555; }
.tgrid .th { background: #f1f1f1; display: flex; align-items: center; gap: 1px; padding-left: 3px; }
.tgrid .n { background: #f1f1f1; padding-left: 2px; }
.fb { width: 3.500px; height: 3.500px; border: .5px solid #777; background: #fff; flex: none; }
.cmin { color: #8f3a52; }
.cmax { color: #3e7d4f; }
.cavg { color: #3a3d8c; }
.greyarea { flex: 1; background: #a0a0a0; }
.t3 { height: 12px; }
.status { height: 7px; flex: none; background: #0078d0; display: flex; align-items: center; color: #d5e9f8; white-space: nowrap; line-height: 7px; }
.status span { display: block; }
.s1 { margin-left: 478px; width: 28px; }
.s2 { width: 29px; }
.s3 { width: 52px; }
.s4 { width: 18px; }
.s5 { width: 13px; }
```
